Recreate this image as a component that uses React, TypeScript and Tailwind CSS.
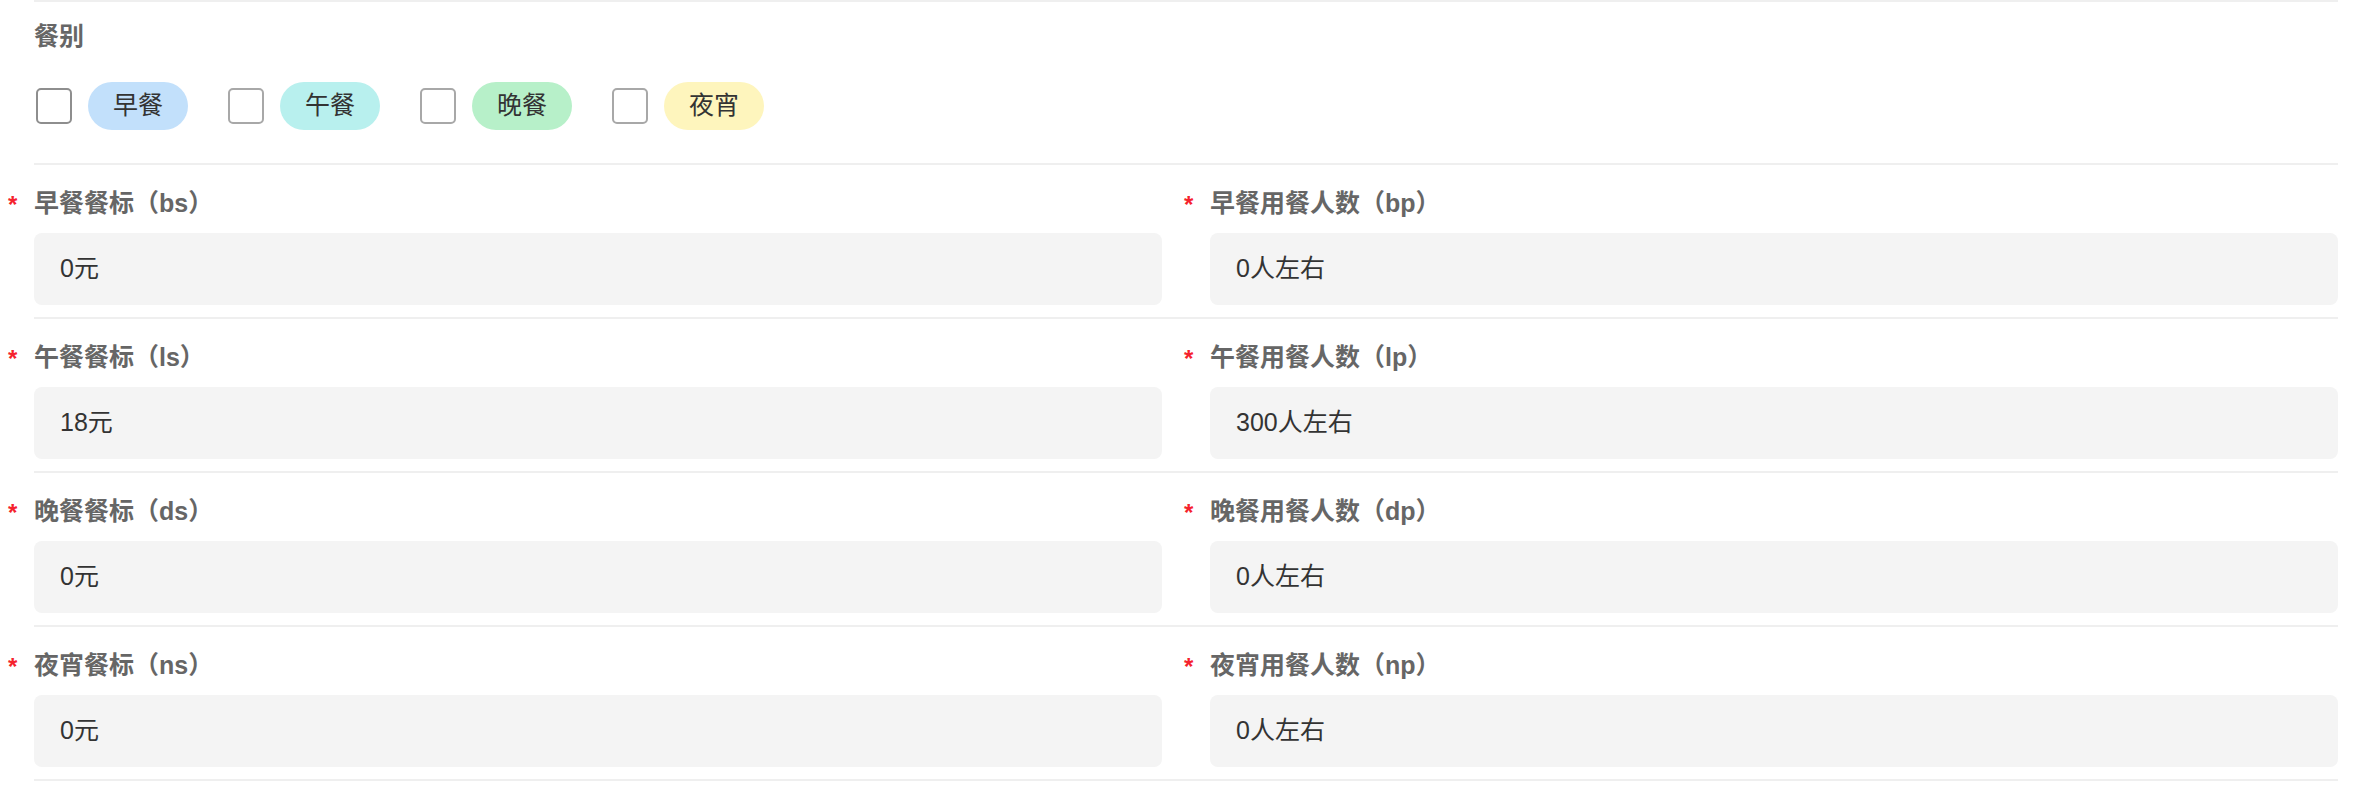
import type { ReactNode } from 'react';

const meals = [
    { label: '早餐', className: 'bg-[#c2e0fb]' },
    { label: '午餐', className: 'bg-[#b8f0ee]' },
    { label: '晚餐', className: 'bg-[#b7f0c9]' },
    { label: '夜宵', className: 'bg-[#fef5bd]' },
];

const rows = [
    { left: ['早餐餐标（bs）', '0元'], right: ['早餐用餐人数（bp）', '0人左右'] },
    { left: ['午餐餐标（ls）', '18元'], right: ['午餐用餐人数（lp）', '300人左右'] },
    { left: ['晚餐餐标（ds）', '0元'], right: ['晚餐用餐人数（dp）', '0人左右'] },
    { left: ['夜宵餐标（ns）', '0元'], right: ['夜宵用餐人数（np）', '0人左右'] },
];

function Field({ label, value }: { label: string; value: ReactNode }) {
    return (
        <div>
            <div className="relative h-[36px] text-[25px] leading-[36px] font-semibold text-[#666666]">
                <span className="absolute left-[-26px] top-[2px] text-[24px] leading-[36px] text-[#f5222d]">*</span>
                {label}
            </div>
            <div className="mt-[12px] flex h-[72px] items-center rounded-[8px] bg-[#f4f4f4] px-[26px] text-[25px] text-[#333333]">
                {value}
            </div>
        </div>
    );
}

export default function App() {
    return (
        <div
            className="min-h-[800px] bg-white pl-[34px] pr-[30px]"
            style={{ fontFamily: '"Liberation Sans", "Noto Sans CJK SC", sans-serif' }}
        >
            <div className="border-t-2 border-[#efefef] pt-[16px] pb-[33px]">
                <div className="h-[36px] text-[25px] leading-[36px] font-semibold text-[#666666]">餐别</div>
                <div className="mt-[28px] flex items-center gap-[38px]">
                    {meals.map((meal, i) => (
                        <div key={meal.label} className="flex items-center gap-[16px]">
                            <span
                                className={
                                    i === 0
                                        ? 'ml-[2px] h-[36px] w-[36px] rounded-[5px] border-2 border-[#8e8e8e] bg-white'
                                        : 'ml-[2px] h-[36px] w-[36px] rounded-[5px] border-2 border-[#a8a8a8] bg-white'
                                }
                            />
                            <span
                                className={`flex h-[48px] w-[100px] items-center justify-center rounded-full text-[25px] text-[#333333] ${meal.className}`}
                            >
                                {meal.label}
                            </span>
                        </div>
                    ))}
                </div>
            </div>

            {rows.map((row) => (
                <div
                    key={row.left[0]}
                    className="grid grid-cols-2 gap-x-[48px] border-t-2 border-[#efefef] pt-[20px] pb-[12px]"
                >
                    <Field label={row.left[0]} value={row.left[1]} />
                    <Field label={row.right[0]} value={row.right[1]} />
                </div>
            ))}
            <div className="border-t-2 border-[#efefef]" />
        </div>
    );
}
